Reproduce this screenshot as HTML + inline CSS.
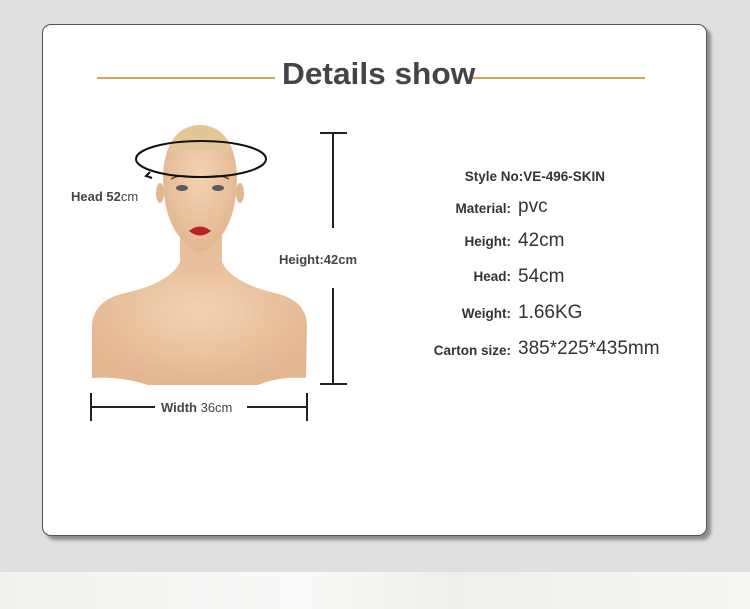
<!DOCTYPE html>
<html><head><style>
html,body{margin:0;padding:0}
body{width:750px;height:609px;position:relative;overflow:hidden;background:#dfdfdf;font-family:"Liberation Sans",sans-serif}
.bottom{position:absolute;left:0;top:572px;width:750px;height:37px;background:linear-gradient(90deg,#f3f1ee,#faf9f7 40%,#f1efec 60%,#f7f6f3)}
.card{position:absolute;left:42px;top:24px;width:663px;height:510px;background:#fff;border:1px solid #555;border-radius:9px;box-shadow:4px 4px 3px #8d8d8d}
.t{position:absolute;color:#444;white-space:nowrap}
.line{position:absolute;height:2px;background:#cda85a;top:77px}
.lab{position:absolute;right:239px;font-weight:bold;font-size:13.5px;color:#333;white-space:nowrap}
.val{position:absolute;left:518px;font-size:19px;color:#333;white-space:nowrap}
</style></head><body>
<div class="card"></div>
<div class="bottom"></div>
<div class="line" style="left:97px;width:178px"></div>
<div class="line" style="left:470px;width:175px"></div>
<div class="t" style="left:282px;top:56px;font-size:31px;font-weight:bold;color:#454545;transform:scaleX(1.02);transform-origin:left">Details show</div>

<svg style="position:absolute;left:0;top:0" width="750" height="609">
 <defs><radialGradient id="sk" cx="50%" cy="40%" r="60%"><stop offset="0" stop-color="#f3d3b3"/><stop offset="1" stop-color="#e2b690"/></radialGradient></defs>
 <path d="M92 325 Q94 300 125 293 Q170 283 180 262 L222 262 Q232 283 275 293 Q306 300 307 325 L306 378 Q280 376 258 385 L148 385 Q120 376 92 378 Z" fill="url(#sk)"/>
 <rect x="180" y="225" width="42" height="50" fill="#e8c09b"/>
 <path d="M200 126 Q166 126 163 175 Q163 215 178 235 Q192 252 200 252 Q208 252 222 235 Q237 215 237 175 Q234 126 200 126Z" fill="url(#sk)"/>
 <path d="M170 150 Q175 126 200 125 Q225 126 230 150 Z" fill="#e2c796"/>
 <ellipse cx="160" cy="193" rx="4" ry="10" fill="#e2b690"/><ellipse cx="240" cy="193" rx="4" ry="10" fill="#e2b690"/>
 <path d="M171 179 Q180 174 190 177 M210 177 Q220 174 229 179" stroke="#6b4a3a" stroke-width="1.5" fill="none"/>
 <ellipse cx="182" cy="188" rx="6" ry="3" fill="#5d5a5c"/><ellipse cx="218" cy="188" rx="6" ry="3" fill="#5d5a5c"/>
 <path d="M189 231 Q200 222 211 231 Q200 240 189 231Z" fill="#b8232a"/>
 <ellipse cx="201" cy="159" rx="65" ry="18" fill="none" stroke="#111" stroke-width="2"/>
 <path d="M150 172 l-4 4 l6 2" stroke="#111" stroke-width="2" fill="none"/>
 <g stroke="#222" stroke-width="2">
  <line x1="333" y1="133" x2="333" y2="228"/><line x1="320" y1="133" x2="347" y2="133"/>
  <line x1="333" y1="288" x2="333" y2="384"/><line x1="320" y1="384" x2="347" y2="384"/>
  <line x1="91" y1="393" x2="91" y2="421"/><line x1="307" y1="393" x2="307" y2="421"/>
  <line x1="91" y1="407" x2="155" y2="407"/><line x1="247" y1="407" x2="307" y2="407"/>
 </g>
</svg>
<div class="t" style="left:71px;top:189px;font-size:13px;font-weight:bold">Head 52<span style="font-weight:normal">cm</span></div>
<div class="t" style="left:279px;top:252px;font-size:13px;font-weight:bold">Height:42cm</div>
<div class="t" style="left:161px;top:400px;font-size:13px;font-weight:bold">Width <span style="font-weight:normal">36cm</span></div>

<div class="lab" style="top:169px;right:145px">Style No:VE-496-SKIN</div>
<div class="lab" style="top:201px">Material:</div><div class="val" style="top:196px">pvc</div>
<div class="lab" style="top:234px">Height:</div><div class="val" style="top:230px">42cm</div>
<div class="lab" style="top:269px">Head:</div><div class="val" style="top:266px">54cm</div>
<div class="lab" style="top:306px">Weight:</div><div class="val" style="top:302px">1.66KG</div>
<div class="lab" style="top:343px">Carton size:</div><div class="val" style="top:338px">385*225*435mm</div>
</body></html>
